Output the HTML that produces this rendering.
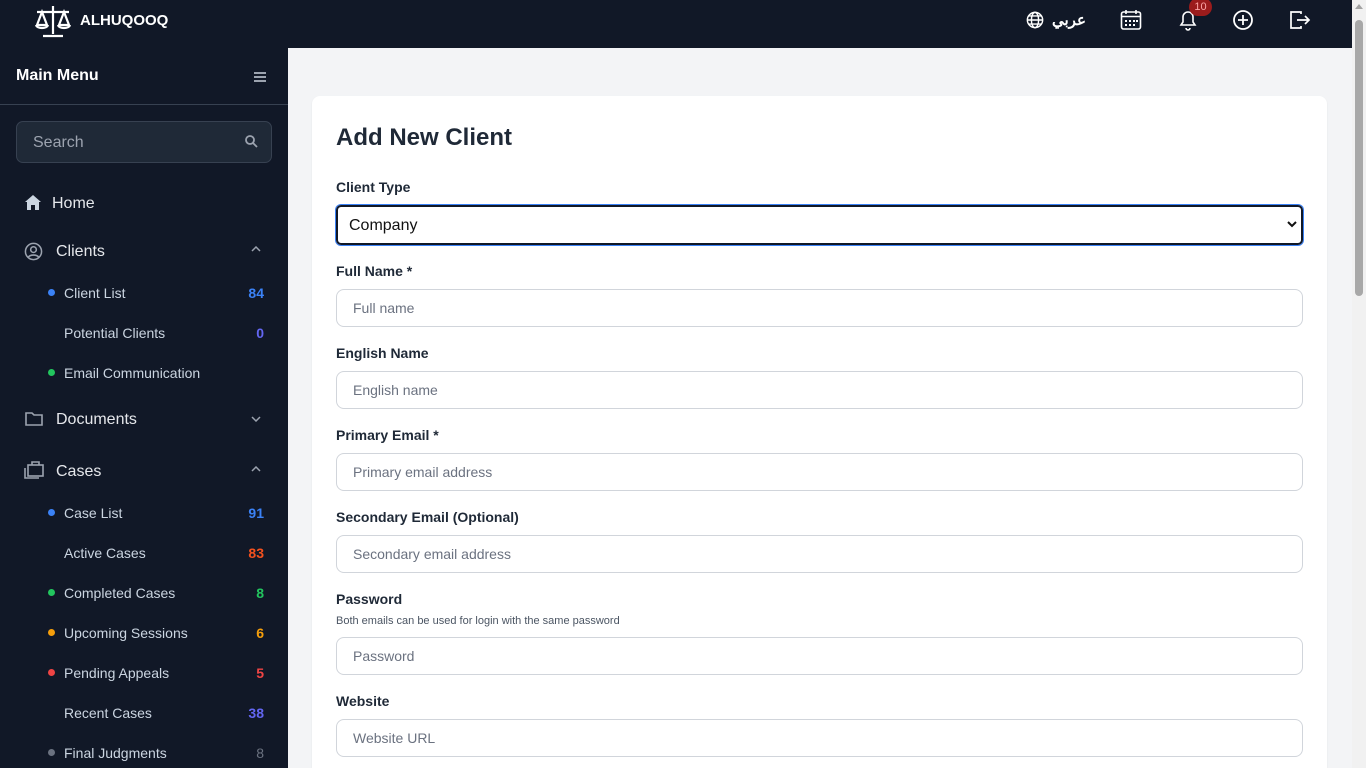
<!DOCTYPE html>
<html style="overflow:hidden;height:768px"><head><meta charset="utf-8"><style>
*{box-sizing:border-box;margin:0;padding:0}
body{width:1366px;height:768px;overflow:hidden;font-family:"Liberation Sans","Noto Sans CJK SC",sans-serif;background:#f3f4f6;position:relative}
.top{position:absolute;left:0;top:0;width:1352px;height:48px;background:#111827}
.side{position:absolute;left:0;top:48px;width:288px;height:720px;background:#111827;color:#e5e7eb}
.sb{position:absolute;right:0;top:0;width:14px;height:768px;background:#f1f1f1}
.thumb{position:absolute;left:3px;top:20px;width:8px;height:276px;background:#a8a8a8;border-radius:4px}
.card{position:absolute;left:312px;top:96px;width:1015px;height:672px;background:#fff;border-radius:8px 8px 0 0;box-shadow:0 1px 2px rgba(0,0,0,.06);overflow:hidden}
.lab{position:absolute;left:24px;font-size:14px;font-weight:bold;color:#1f2937}
.inp{position:absolute;left:24px;width:967px;height:38px;border:1px solid #d1d5db;border-radius:8px;font-size:14px;color:#6b7280;padding:10px 16px}
.ic{position:absolute;color:#fff}
.sub{position:absolute;left:64px;font-size:14px;color:#cbd5e1}
.dot{position:absolute;left:48px;width:7px;height:7px;border-radius:50%}
.n{position:absolute;right:24px;font-size:14px;font-weight:bold}
</style></head><body>
<div class="top">
<svg style="position:absolute;left:33px;top:4px" width="40" height="34" viewBox="0 0 40 34" fill="none" stroke="#fff" stroke-width="2.2"><path d="M20 2v28M10 32h20M4 8h32M9 8l-5 13h10zM31 8l-5 13h10zM3 21c1 4 11 4 12 0M25 21c1 4 11 4 12 0"/></svg>
<div style="position:absolute;left:80px;top:12px;color:#fff;font-weight:bold;font-size:15px">ALHUQOOQ</div>
<svg class="ic" style="left:1026px;top:11px" width="18" height="18" viewBox="0 0 20 20" fill="none" stroke="#fff" stroke-width="1.6"><circle cx="10" cy="10" r="8.5"/><ellipse cx="10" cy="10" rx="4" ry="8.5"/><path d="M1.5 10h17M3 5.5h14M3 14.5h14"/></svg>
<div style="position:absolute;left:1052px;top:11px;color:#fff;font-weight:bold;font-size:15px">عربي</div>
<svg style="position:absolute;left:1120px;top:9px" width="22" height="22" viewBox="0 0 22 22" fill="none" stroke="#fff" stroke-width="1.6"><rect x="1.5" y="3" width="19" height="17" rx="2"/><path d="M1.5 7.5h19M6 1v4M16 1v4"/><g fill="#fff" stroke="none"><rect x="5" y="11" width="2" height="2"/><rect x="9" y="11" width="2" height="2"/><rect x="13" y="11" width="2" height="2"/><rect x="5" y="15" width="2" height="2"/><rect x="9" y="15" width="2" height="2"/><rect x="13" y="15" width="2" height="2"/><rect x="16" y="11" width="2" height="2"/></g></svg>
<svg style="position:absolute;left:1178px;top:9px" width="20" height="22" viewBox="0 0 20 22" fill="none" stroke="#fff" stroke-width="1.6"><path d="M3 16h14l-2-3V8a5 5 0 0 0-10 0v5zM8 19a2 2 0 0 0 4 0"/></svg>
<div style="position:absolute;left:1189px;top:-2px;width:23px;height:18px;border-radius:9px;background:#9b1c1c;color:#fca5a5;font-size:11px;text-align:center;line-height:18px">10</div>
<svg style="position:absolute;left:1232px;top:9px" width="22" height="22" viewBox="0 0 22 22" fill="none" stroke="#fff" stroke-width="1.8"><circle cx="11" cy="11" r="9"/><path d="M11 6v10M6 11h10"/></svg>
<svg style="position:absolute;left:1289px;top:9px" width="22" height="22" viewBox="0 0 22 22" fill="none" stroke="#fff" stroke-width="1.7"><path d="M12 5V3H2v16h10v-2M8 11h12M16 7l4 4-4 4"/></svg>
</div>
<div class="side">
<div style="position:absolute;left:16px;top:19px;font-weight:bold;font-size:16px;color:#fff">Main Menu</div>
<div style="position:absolute;left:254px;top:24px;width:12px;height:2px;background:#9ca3af;box-shadow:0 4px 0 #9ca3af,0 8px 0 #9ca3af"></div>
<div style="position:absolute;left:0;top:56px;width:288px;height:1px;background:#374151"></div>
<div style="position:absolute;left:16px;top:73px;width:256px;height:42px;background:#1f2937;border:1px solid #374151;border-radius:7px;color:#9ca3af;font-size:16px;padding:12px 16px">Search
<svg style="position:absolute;right:13px;top:13px" width="13" height="13" viewBox="0 0 13 13" fill="none" stroke="#9ca3af" stroke-width="1.8"><circle cx="5" cy="5" r="4"/><path d="M8 8l4 4"/></svg></div>
<svg style="position:absolute;left:25px;top:147px" width="16" height="15" viewBox="0 0 16 15" fill="#cbd5e1"><path d="M8 0L0 7h2v8h4v-5h4v5h4V7h2z"/></svg>
<div style="position:absolute;left:52px;top:147px;font-size:16px">Home</div>
<svg style="position:absolute;left:24px;top:194px" width="19" height="19" viewBox="0 0 20 20" fill="none" stroke="#9ca3af" stroke-width="1.6"><circle cx="10" cy="10" r="8.5"/><circle cx="10" cy="8" r="3"/><path d="M4.5 16c2-3 9-3 11 0"/></svg>
<div style="position:absolute;left:56px;top:195px;font-size:16px">Clients</div>
<svg style="position:absolute;left:251px;top:198px" width="10" height="6" viewBox="0 0 10 6" fill="none" stroke="#9ca3af" stroke-width="1.5"><path d="M1 5l4-4 4 4"/></svg>
<div class="dot" style="top:241px;background:#3b82f6"></div><div class="sub" style="top:237px">Client List</div><div class="n" style="top:237px;color:#3b82f6">84</div>
<div class="sub" style="top:277px">Potential Clients</div><div class="n" style="top:277px;color:#6366f1">0</div>
<div class="dot" style="top:321px;background:#22c55e"></div><div class="sub" style="top:317px">Email Communication</div>
<svg style="position:absolute;left:25px;top:363px" width="18" height="15" viewBox="0 0 18 15" fill="none" stroke="#9ca3af" stroke-width="1.6"><path d="M1 2h6l2 2h8v10H1z"/></svg>
<div style="position:absolute;left:56px;top:363px;font-size:16px">Documents</div>
<svg style="position:absolute;left:251px;top:368px" width="10" height="6" viewBox="0 0 10 6" fill="none" stroke="#9ca3af" stroke-width="1.5"><path d="M1 1l4 4 4-4"/></svg>
<svg style="position:absolute;left:24px;top:413px" width="20" height="18" viewBox="0 0 20 18" fill="none" stroke="#9ca3af" stroke-width="1.6"><rect x="4" y="4" width="15" height="11"/><path d="M8 4V1h7v3M1 7v10h14"/></svg>
<div style="position:absolute;left:56px;top:415px;font-size:16px">Cases</div>
<svg style="position:absolute;left:251px;top:418px" width="10" height="6" viewBox="0 0 10 6" fill="none" stroke="#9ca3af" stroke-width="1.5"><path d="M1 5l4-4 4 4"/></svg>
<div class="dot" style="top:461px;background:#3b82f6"></div><div class="sub" style="top:457px">Case List</div><div class="n" style="top:457px;color:#3b82f6">91</div>
<div class="sub" style="top:497px">Active Cases</div><div class="n" style="top:497px;color:#f4511e">83</div>
<div class="dot" style="top:541px;background:#22c55e"></div><div class="sub" style="top:537px">Completed Cases</div><div class="n" style="top:537px;color:#22c55e">8</div>
<div class="dot" style="top:581px;background:#f59e0b"></div><div class="sub" style="top:577px">Upcoming Sessions</div><div class="n" style="top:577px;color:#f59e0b">6</div>
<div class="dot" style="top:621px;background:#ef4444"></div><div class="sub" style="top:617px">Pending Appeals</div><div class="n" style="top:617px;color:#ef4444">5</div>
<div class="sub" style="top:657px">Recent Cases</div><div class="n" style="top:657px;color:#6366f1">38</div>
<div class="dot" style="top:701px;background:#6b7280"></div><div class="sub" style="top:697px">Final Judgments</div><div class="n" style="top:697px;color:#6b7280;font-weight:normal">8</div>
</div>
<div class="card">
<div style="position:absolute;left:24px;top:28px;font-size:24px;font-weight:bold;color:#1f2937">Add New Client</div>
<div class="lab" style="top:83px">Client Type</div>
<div class="inp" style="top:109px;height:40px;border:2px solid #111827;box-shadow:0 0 0 1px #3b82f6;border-radius:5px;color:#111;font-size:16px;padding:10px 11px">Company<svg style="position:absolute;right:4px;top:13px" width="10" height="8" viewBox="0 0 10 8" fill="none" stroke="#111" stroke-width="2"><path d="M1 2l4 4 4-4"/></svg></div>
<div class="lab" style="top:167px">Full Name *</div><div class="inp" style="top:193px">Full name</div>
<div class="lab" style="top:249px">English Name</div><div class="inp" style="top:275px">English name</div>
<div class="lab" style="top:331px">Primary Email *</div><div class="inp" style="top:357px">Primary email address</div>
<div class="lab" style="top:413px">Secondary Email (Optional)</div><div class="inp" style="top:439px">Secondary email address</div>
<div class="lab" style="top:495px">Password</div>
<div style="position:absolute;left:24px;top:519px;font-size:11px;color:#4b5563">Both emails can be used for login with the same password</div>
<div class="inp" style="top:541px">Password</div>
<div class="lab" style="top:597px">Website</div><div class="inp" style="top:623px">Website URL</div>
</div>
<div class="sb"><div style="position:absolute;left:3px;top:4px;border:4px solid transparent;border-bottom:5px solid #a3a3a3;border-top:0"></div><div class="thumb"></div></div>
</body></html>
